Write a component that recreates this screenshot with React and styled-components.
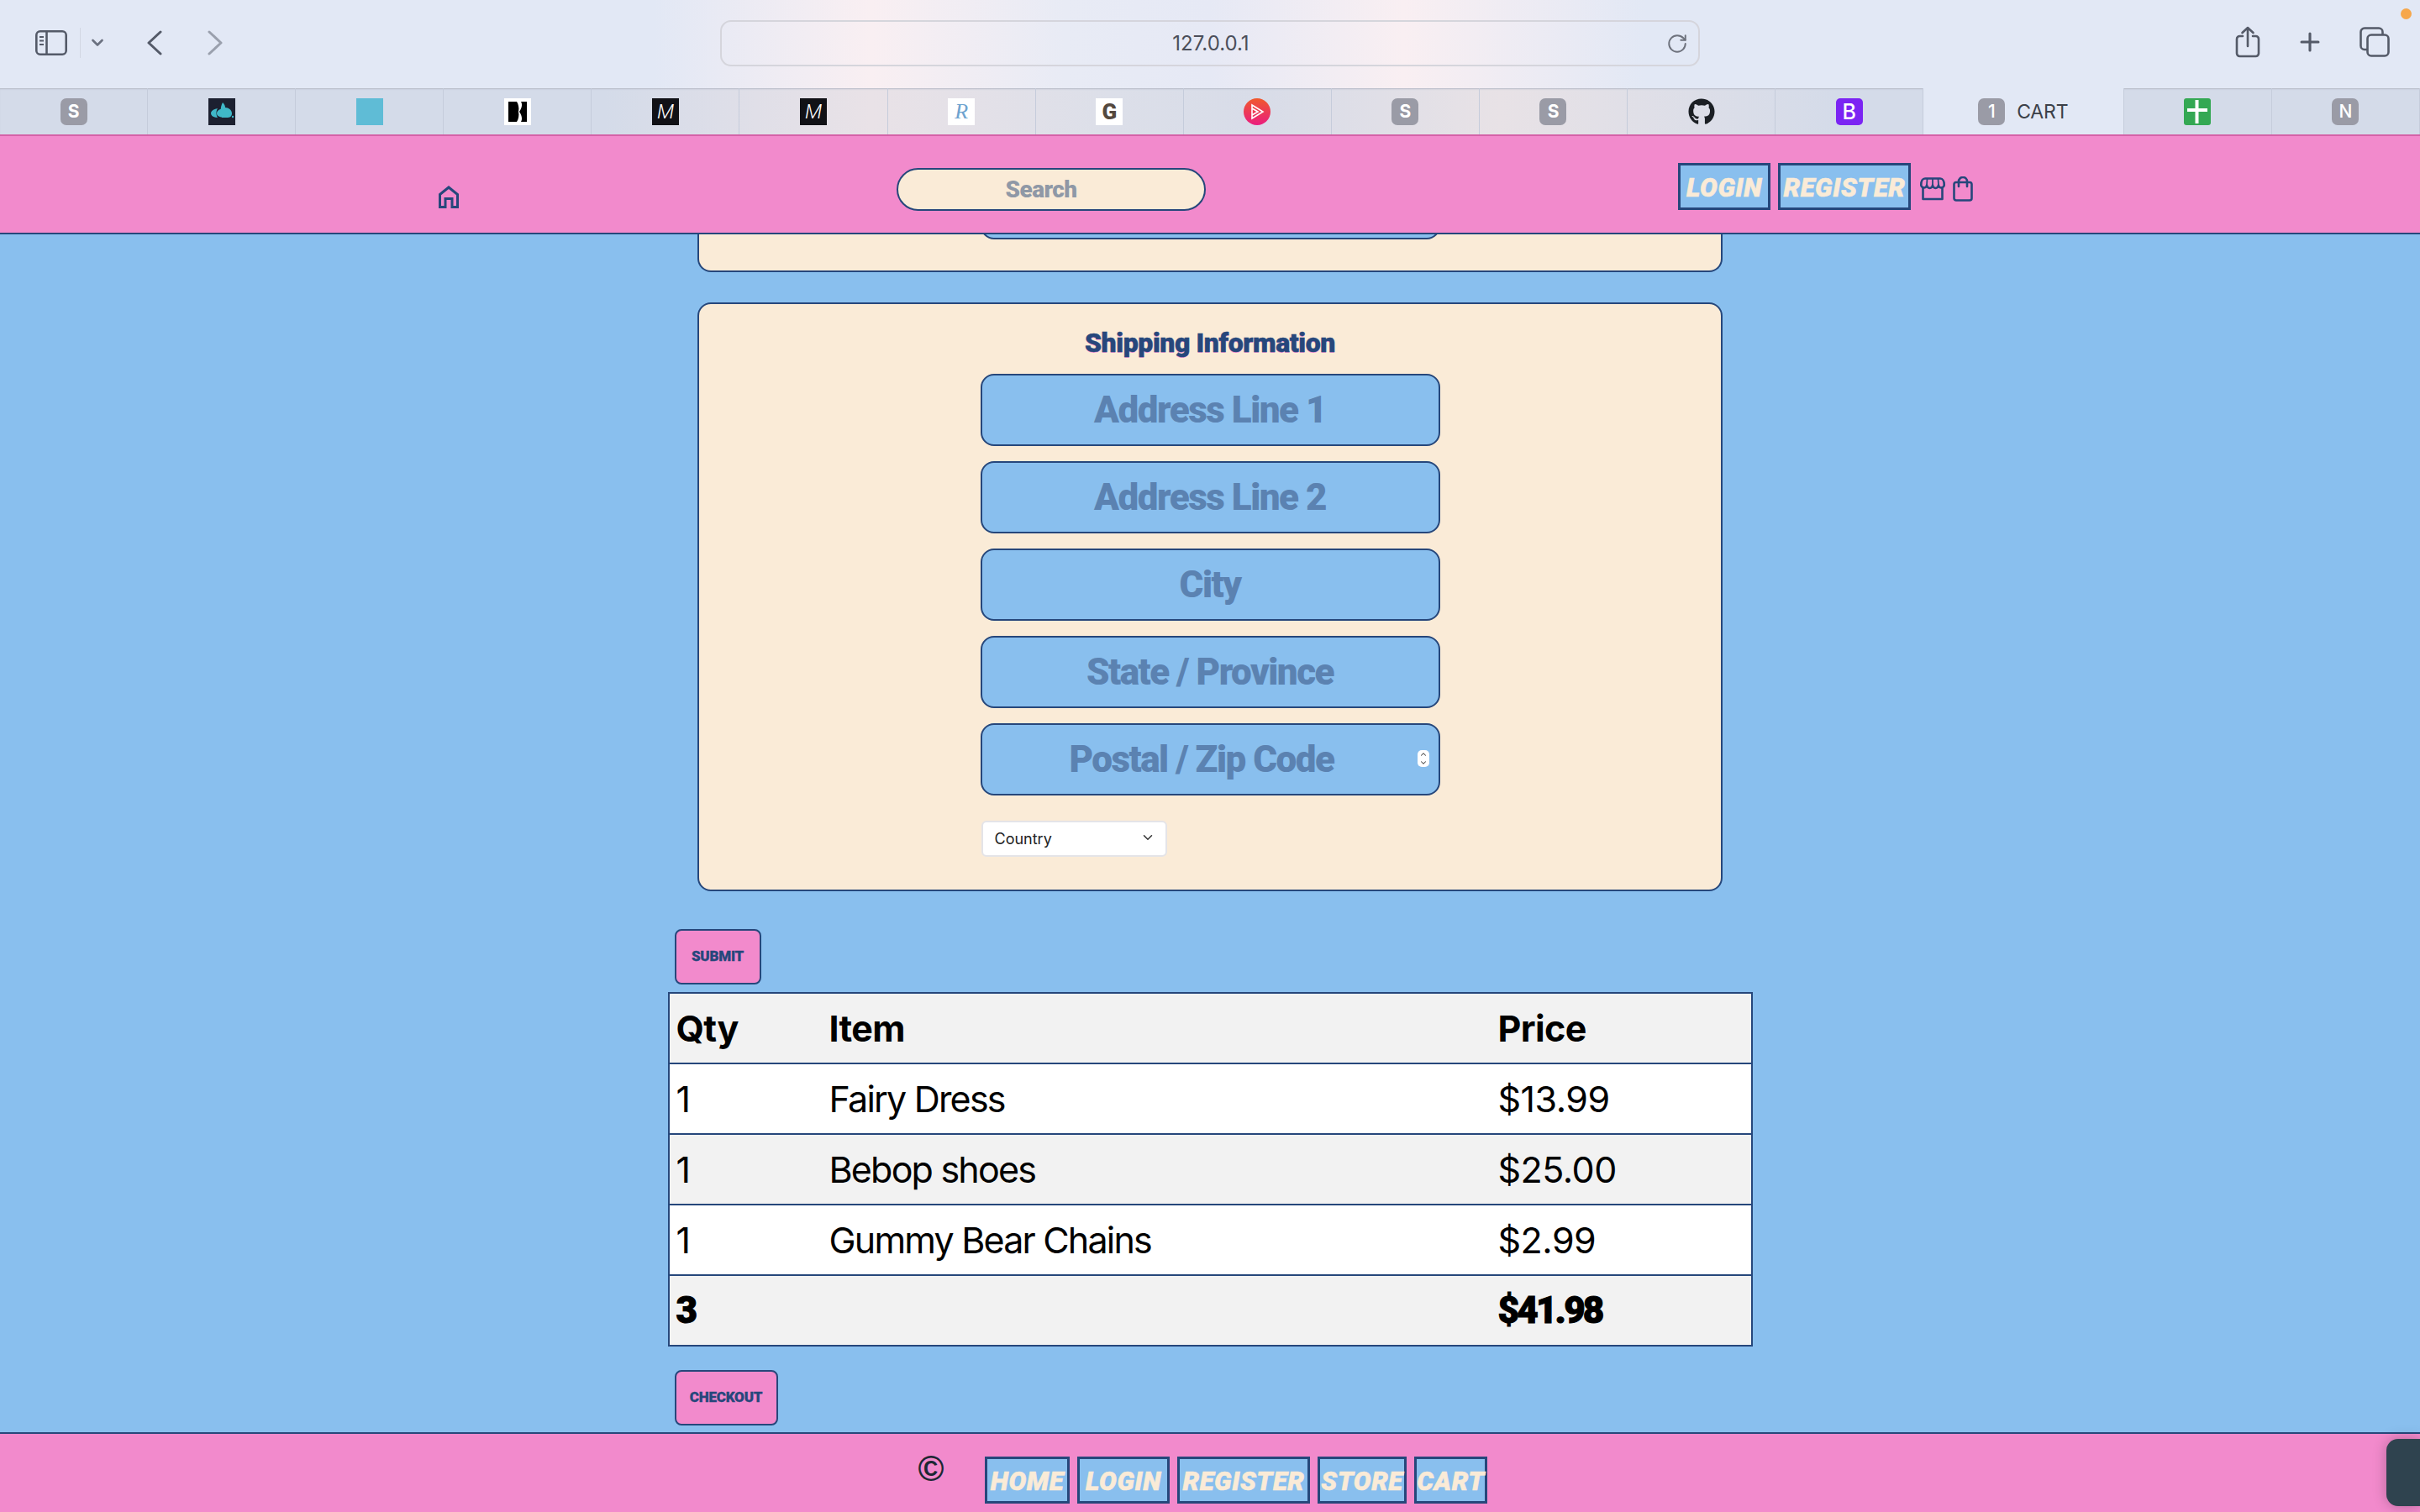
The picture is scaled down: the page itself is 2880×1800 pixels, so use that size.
import React from 'react';
import styled, { createGlobalStyle } from 'styled-components';
import { FaGithub } from 'react-icons/fa';
import { ChevronDown, ChevronUp, Plus, RotateCw } from 'lucide-react';

const navy = '#26477b';
const pink = '#f28acc';
const blue = '#89bfee';
const cream = '#faebd7';
const chunky = "'Roboto', 'Liberation Sans', sans-serif";
const brush = "'Roboto', 'Liberation Sans', sans-serif";

const GlobalStyle = createGlobalStyle`
    html, body {
        margin: 0;
        padding: 0;
        height: 1800px;
        overflow: hidden;
        background: ${blue};
        font-family: 'Inter', 'Liberation Sans', sans-serif;
    }
    * { box-sizing: border-box; }
`;

const Page = styled.div`
    width: 2880px;
    height: 1800px;
    display: flex;
    flex-direction: column;
    position: relative;
    overflow: hidden;
`;

const Toolbar = styled.div`
    height: 105px;
    display: flex;
    align-items: flex-start;
    position: relative;
    color: #545a68;
    background: linear-gradient(90deg, #e2e8f5 0%, #e2e8f5 27%, #f9eff2 36%, #e8ebf5 44%, #e6e9f5 50%, #f9eff2 58%, #e2e8f5 68%, #e2e8f5 100%);
`;

const ToolbarLeft = styled.div`
    display: flex;
    align-items: center;
    height: 44px;
    margin-top: 29px;
    padding-left: 42px;
    width: 857px;
`;

const Separator = styled.span`
    width: 1px;
    height: 36px;
    margin: 0 13px 0 15px;
    background: #d2d7e3;
`;

const ChromeGlyph = styled.svg`
    display: block;
    margin-left: ${(p) => p.$left || 0}px;
    opacity: ${(p) => p.$dim ? 0.5 : 1};
`;

const AddressBar = styled.div`
    width: 1166px;
    height: 55px;
    margin-top: 24px;
    border: 2px solid #d5d5dc;
    border-radius: 13px;
    display: flex;
    align-items: center;
    justify-content: center;
    position: relative;
    font-size: 24px;
    color: #4b4f5a;
    padding-left: 2px;
`;

const Reload = styled.span`
    position: absolute;
    right: 12px;
    top: 13px;
    display: flex;
    color: #6d717c;
`;

const ToolbarRight = styled.div`
    flex: 1;
    display: flex;
    align-items: center;
    height: 44px;
    margin-top: 28px;
    padding-left: 637px;
    gap: 45px;
`;

const OrangeDot = styled.span`
    position: absolute;
    right: 10px;
    top: 10px;
    width: 13px;
    height: 13px;
    border-radius: 50%;
    background: #f6a74b;
`;

const TabStrip = styled.div`
    height: 55px;
    display: flex;
    background: linear-gradient(90deg, #d4dbe9 0%, #d4dbe9 25%, #e9e2e7 36%, #dcdfe9 46%, #d8dce8 52%, #e8e2e6 62%, #d4dbe9 76%, #d4dbe9 100%);
    box-shadow: inset 0 2px 2px -1px #b4b8c4;
`;

const Tab = styled.div`
    flex: ${(p) => (p.$active ? '0 0 238.5px' : '0 0 176.1px')};
    display: flex;
    align-items: center;
    justify-content: ${(p) => (p.$active ? 'flex-start' : 'center')};
    gap: 14px;
    padding-left: ${(p) => (p.$active ? '65px' : '0')};
    border-right: 1px solid #c5ccdb;
    background: ${(p) => (p.$active ? '#e2e8f5' : 'transparent')};
    font-size: 23px;
    color: #3c4048;
    letter-spacing: -0.2px;
`;

const Favicon = styled.span`
    width: 32px;
    height: 32px;
    flex: none;
    display: flex;
    align-items: center;
    justify-content: center;
    overflow: hidden;
    border-radius: ${(p) => p.$radius || '0'};
    background: ${(p) => p.$bg || 'transparent'};
    color: ${(p) => p.$color || '#fff'};
    font-family: ${(p) => p.$font || "'Inter', sans-serif"};
    font-style: ${(p) => p.$italic ? 'italic' : 'normal'};
    font-weight: ${(p) => p.$weight || 700};
    font-size: ${(p) => p.$size || '21px'};
    line-height: 32px;
`;

const Viewport = styled.div`
    flex: 1;
    display: flex;
    flex-direction: column;
    background: ${blue};
    min-height: 0;
`;

const Header = styled.header`
    height: 119px;
    flex: none;
    display: flex;
    align-items: flex-start;
    background: ${pink};
    border-top: 2px solid #d562a8;
    border-bottom: 2px solid ${navy};
    position: relative;
    z-index: 2;
`;

const HomeLink = styled.a`
    display: flex;
    color: ${navy};
    margin: 59px 0 0 522px;
`;

const SearchInput = styled.input`
    width: 368px;
    height: 51px;
    margin: 38px 0 0 521px;
    padding: 0 24px 0 0;
    border: 2px solid ${navy};
    border-radius: 26px;
    background: ${cream};
    text-align: center;
    font-family: ${chunky};
    font-weight: 900;
    font-size: 28px;
    letter-spacing: -0.6px;
    outline: none;
    &::placeholder {
        color: #8f98a6;
        opacity: 1;
    }
`;

const HeaderNav = styled.nav`
    display: flex;
    align-items: flex-start;
    gap: 9px;
    margin: 32px 0 0 562px;
`;

const NavLink = styled.a`
    height: 56px;
    width: ${(p) => p.$w}px;
    flex: none;
    display: flex;
    align-items: center;
    justify-content: center;
    background: ${blue};
    border: 3px solid ${navy};
    color: ${cream};
    font-family: ${brush};
    font-style: italic;
    font-weight: 900;
    font-size: 31px;
    letter-spacing: 0.6px;
    -webkit-text-stroke: 0.6px ${cream};
    padding-top: 2px;
    text-transform: uppercase;
`;

const HeaderIcon = styled.a`
    display: flex;
    color: ${navy};
    margin-top: ${(p) => p.$top}px;
    margin-left: ${(p) => p.$left}px;
`;

const Main = styled.main`
    flex: 1;
    min-height: 0;
    width: 1291px;
    margin: 0 auto;
    display: flex;
    flex-direction: column;
`;

const Card = styled.section`
    width: 1220px;
    margin: 0 auto;
    background: ${cream};
    border: 2px solid ${navy};
    border-radius: 16px;
    display: flex;
    flex-direction: column;
    align-items: center;
`;

const ScrolledCard = styled(Card)`
    height: 45px;
    flex: none;
    border-top: none;
    border-radius: 0 0 16px 16px;
    overflow: hidden;
    margin-bottom: 36px;
`;

const FormStack = styled.div`
    display: flex;
    flex-direction: column;
    gap: 18px;
    width: 547px;
`;

const FormTitle = styled.h2`
    margin: 28px 0 18px;
    font-family: ${chunky};
    font-weight: 900;
    font-size: 32px;
    line-height: 37px;
    letter-spacing: -0.4px;
    color: ${navy};
    -webkit-text-stroke: 0.5px ${navy};
    text-shadow: 0 1px 0 #f59ad6;
`;

const InputWrap = styled.div`
    position: relative;
    display: flex;
`;

const FormInput = styled.input`
    width: 547px;
    height: 86px;
    flex: none;
    padding: 0 ${(p) => (p.$spin ? '20px' : '0')} 0 0;
    background: ${blue};
    border: 2px solid ${navy};
    border-radius: 16px;
    text-align: center;
    font-family: ${chunky};
    font-weight: 900;
    font-size: 44px;
    letter-spacing: -1.5px;
    outline: none;
    &::placeholder {
        color: #5b82b1;
        opacity: 1;
    }
`;

const ScrolledInput = styled(FormInput)`
    margin-top: -80px;
`;

const Spinner = styled.span`
    position: absolute;
    right: 13px;
    top: 32px;
    width: 14px;
    height: 20px;
    border-radius: 5px;
    background: #fff;
    color: #444;
    display: flex;
    flex-direction: column;
    align-items: center;
    justify-content: center;
`;

const SelectWrap = styled.div`
    position: relative;
    width: 221px;
    margin: 12px 0 39px 1px;
    color: #333;
`;

const CountrySelect = styled.select`
    width: 221px;
    height: 43px;
    display: block;
    appearance: none;
    padding: 0 0 0 14px;
    border: 2px solid #e4e4e8;
    border-radius: 6px;
    background: #fff;
    color: #222;
    font-family: 'Inter', sans-serif;
    font-size: 18px;
`;

const SelectArrow = styled.span`
    position: absolute;
    right: 14px;
    top: 11px;
    display: flex;
`;

const ActionButton = styled.button`
    flex: none;
    align-self: flex-start;
    height: 66px;
    width: ${(p) => p.$w}px;
    margin: ${(p) => p.$margin};
    padding: 0 0 2px;
    background: ${pink};
    border: 2px solid ${navy};
    border-radius: 8px;
    color: ${navy};
    font-family: ${chunky};
    font-weight: 900;
    font-size: 17px;
    letter-spacing: -0.2px;
    -webkit-text-stroke: 0.3px ${navy};
    text-transform: uppercase;
`;

const CartTable = styled.table`
    width: 1291px;
    flex: none;
    table-layout: fixed;
    border-collapse: collapse;
    border: 2px solid ${navy};
    font-size: 43px;
    color: #000;
`;

const Row = styled.tr`
    height: 84px;
    background: ${(p) => (p.$shade ? '#f2f2f2' : '#fff')};
    border-bottom: 2px solid ${navy};
`;

const HeadCell = styled.th`
    padding: 0 0 0 8px;
    text-align: left;
    font-weight: 700;
    letter-spacing: -0.6px;
`;

const Cell = styled.td`
    padding: 0 0 0 8px;
    letter-spacing: ${(p) => (p.$tight ? '-1.8px' : '-0.5px')};
`;

const TotalCell = styled.td`
    padding: 0 0 0 8px;
    font-family: ${chunky};
    font-weight: 900;
    font-size: 44px;
    letter-spacing: -2.8px;
    -webkit-text-stroke: 1px #000;
`;

const Footer = styled.footer`
    height: 95px;
    flex: none;
    display: flex;
    align-items: flex-start;
    padding: 27px 0 0 1090px;
    background: ${pink};
    border-top: 2px solid ${navy};
    position: relative;
`;

const Copyright = styled.span`
    width: 36px;
    margin: -9px 46px 0 0;
    text-align: center;
    font-family: 'Liberation Sans', sans-serif;
    font-weight: 700;
    font-size: 42px;
    line-height: 48px;
    color: #1d2733;
`;

const FooterNav = styled.nav`
    display: flex;
    gap: 9px;
`;

const SideHandle = styled.div`
    position: absolute;
    right: 0;
    bottom: 7px;
    width: 40px;
    height: 80px;
    border-radius: 14px 0 0 14px;
    background: #2f434f;
    box-shadow: 0 0 16px rgba(0, 0, 0, 0.25);
`;

const SidebarIcon = () => (
    <svg width="38" height="30" viewBox="0 0 38 30" fill="none" stroke="currentColor" strokeWidth="2.6">
        <rect x="1.3" y="1.3" width="35.4" height="27.4" rx="4.500" />
        <path d="M13.500 1.500v27" />
        <path d="M5 8h5M5 12.500h5M5 17h5" strokeWidth="1.800" />
    </svg>
);

const SmallChevron = () => (
    <ChromeGlyph width="14" height="10" viewBox="0 0 14 10" fill="none" stroke="#6b7180" strokeWidth="2.600" strokeLinecap="round" strokeLinejoin="round">
        <path d="M1.500 2 7 7.500 12.500 2" />
    </ChromeGlyph>
);

const BackChevron = () => (
    <ChromeGlyph $left={52} width="18" height="30" viewBox="0 0 18 30" fill="none" stroke="currentColor" strokeWidth="3" strokeLinecap="round" strokeLinejoin="round">
        <path d="M16 2 2 15l14 13" />
    </ChromeGlyph>
);

const ForwardChevron = () => (
    <ChromeGlyph $left={54} $dim width="18" height="30" viewBox="0 0 18 30" fill="none" stroke="currentColor" strokeWidth="3" strokeLinecap="round" strokeLinejoin="round">
        <path d="m2 2 14 13L2 28" />
    </ChromeGlyph>
);

const ShareIcon = () => (
    <svg width="30" height="38" viewBox="0 0 30 38" fill="none" stroke="currentColor" strokeWidth="2.600" strokeLinecap="round" strokeLinejoin="round">
        <path d="M9 12H5.500A3.500 3.500 0 0 0 2 15.500v17A3.500 3.500 0 0 0 5.500 36h19a3.500 3.500 0 0 0 3.500-3.500v-17A3.500 3.500 0 0 0 24.500 12H21" />
        <path d="M15 24V2M8.500 8 15 2l6.500 6" />
    </svg>
);

const TabsIcon = () => (
    <svg width="36" height="36" viewBox="0 0 36 36" fill="none" stroke="currentColor" strokeWidth="2.600">
        <path d="M9 27H6a4.500 4.500 0 0 1-4.500-4.500V6A4.500 4.500 0 0 1 6 1.500h17A4.500 4.500 0 0 1 27.500 6v3" />
        <rect x="9.500" y="9.500" width="25" height="25" rx="4.500" />
    </svg>
);

const HomeIcon = () => (
    <svg width="24" height="27" viewBox="0 0 24 27" fill="none" stroke="currentColor" strokeWidth="3" strokeLinejoin="miter">
        <path d="M1.500 10.500 12 2l10.500 8.500v15h-6.500V15.500H8v10H1.500z" />
    </svg>
);

const StoreIcon = () => (
    <svg width="30" height="28" viewBox="0 0 30 28" fill="none" stroke="currentColor" strokeWidth="2.600" strokeLinecap="round" strokeLinejoin="round">
        <path d="M6 1.500h18c3 0 4.700 3.500 4.700 7a3.300 3.300 0 0 1-6.800 1 3.400 3.400 0 0 1-6.900 0 3.400 3.400 0 0 1-6.900 0 3.300 3.300 0 0 1-6.800-1c0-3.500 1.700-7 4.700-7z" />
        <path d="M8.500 2 8 9M15 2v7M21.500 2l.5 7" strokeWidth="1.800" />
        <path d="M3.500 13v13h23V13" />
    </svg>
);

const BagIcon = () => (
    <svg width="24" height="30" viewBox="0 0 24 30" fill="none" stroke="currentColor" strokeWidth="2.600" strokeLinecap="round" strokeLinejoin="round">
        <rect x="1.500" y="7" width="21" height="21.500" rx="2.500" />
        <path d="M7 12V6a5 5 0 0 1 10 0v6" />
    </svg>
);

const LeafMark = () => (
    <svg width="32" height="32" viewBox="0 0 32 32">
        <rect width="32" height="32" fill="#1c2030" />
        <path d="M11 12C6 13 3 15 3 18c0 3 4 5 8 5 -2-3-2-8 0-11zM17 12c-4 1-7 3-7 6s3 4 7 5c-2-3-2-8 0-11zM17 5c-3 5-3 13-1 18h7c4 0 5-3 5-5 0-4-4-7-8-7 0-2-1-4-3-6z" fill="#3fb8c8" />
        <circle cx="29" cy="22" r="1.200" fill="#3fb8c8" />
    </svg>
);

const BarsMark = () => (
    <svg width="32" height="32" viewBox="0 0 32 32">
        <rect width="32" height="32" fill="#fff" />
        <rect x="5" y="4" width="22" height="24" fill="#000" />
        <path d="M15 4h5c2 3 1 8-2 12 3 4 4 9 2 12h-5c2-3 3-8 2-12 1-4 0-9-2-12z" fill="#fff" />
    </svg>
);

const PlayMark = () => (
    <svg width="32" height="32" viewBox="0 0 32 32">
        <defs>
            <linearGradient id="playFill" x1="0" y1="0" x2="0" y2="1">
                <stop offset="0" stopColor="#f0592c" />
                <stop offset="1" stopColor="#ea1d7f" />
            </linearGradient>
        </defs>
        <circle cx="16" cy="16" r="16" fill="url(#playFill)" />
        <path d="M10 8l13 8-13 8zM10 12l7 4-7 4" fill="none" stroke="#fff" strokeWidth="1.600" />
    </svg>
);

const CrossMark = () => (
    <svg width="32" height="32" viewBox="0 0 32 32">
        <rect width="32" height="32" rx="3" fill="#34a853" />
        <path d="M13.500 2h4v10H28v4H17.500v14h-4V16H4v-4h9.500z" fill="#fff" />
    </svg>
);

const tabs = [
    { key: 's1', fav: <Favicon $bg="#9a9ba6" $radius="7px">S</Favicon> },
    { key: 'leaf', fav: <Favicon><LeafMark /></Favicon> },
    { key: 'teal', fav: <Favicon $bg="#5fbcd6" /> },
    { key: 'bars', fav: <Favicon><BarsMark /></Favicon> },
    { key: 'm1', fav: <Favicon $bg="#111116" $italic $weight={300} $size="24px" $font="'Roboto', sans-serif">M</Favicon> },
    { key: 'm2', fav: <Favicon $bg="#111116" $italic $weight={300} $size="24px" $font="'Roboto', sans-serif">M</Favicon> },
    { key: 'r', fav: <Favicon $bg="#fff" $color="#6ea3cf" $italic $weight={400} $size="26px" $font="'Liberation Serif', serif">R</Favicon> },
    { key: 'g', fav: <Favicon $bg="#fff" $color="#54493f" $weight={900} $size="26px" $font="'Roboto', sans-serif">G</Favicon> },
    { key: 'play', fav: <Favicon><PlayMark /></Favicon> },
    { key: 's2', fav: <Favicon $bg="#9a9ba6" $radius="7px">S</Favicon> },
    { key: 's3', fav: <Favicon $bg="#9a9ba6" $radius="7px">S</Favicon> },
    { key: 'github', fav: <Favicon $color="#1b1f24"><FaGithub size={32} /></Favicon> },
    { key: 'boot', fav: <Favicon $bg="#7b24f3" $radius="5px" $weight={500} $size="25px">B</Favicon> },
    { key: 'cart', active: true, label: 'CART', fav: <Favicon $bg="#9a9ba6" $radius="7px" $weight={500}>1</Favicon> },
    { key: 'cross', fav: <Favicon><CrossMark /></Favicon> },
    { key: 'n', fav: <Favicon $bg="#9a9ba6" $radius="7px" $weight={500}>N</Favicon> },
];

const shippingFields = ['Address Line 1', 'Address Line 2', 'City', 'State / Province'];

const cartItems = [
    { name: 'Fairy Dress', price: '$13.99' },
    { name: 'Bebop shoes', price: '$25.00' },
    { name: 'Gummy Bear Chains', price: '$2.99' },
];

const footerLinks = [
    { label: 'Home', w: 101 },
    { label: 'Login', w: 110 },
    { label: 'Register', w: 158 },
    { label: 'Store', w: 106 },
    { label: 'Cart', w: 87 },
];

const App = () => (
    <Page>
        <GlobalStyle />
        <Toolbar>
            <ToolbarLeft>
                <SidebarIcon />
                <Separator />
                <SmallChevron />
                <BackChevron />
                <ForwardChevron />
            </ToolbarLeft>
            <AddressBar>
                127.0.0.1
                <Reload><RotateCw size={26} strokeWidth={1.8} /></Reload>
            </AddressBar>
            <ToolbarRight>
                <ShareIcon />
                <Plus size={34} strokeWidth={2.2} style={{ margin: '0 -3px' }} />
                <TabsIcon />
            </ToolbarRight>
            <OrangeDot />
        </Toolbar>
        <TabStrip>
            {tabs.map((tab) => (
                <Tab key={tab.key} $active={tab.active}>
                    {tab.fav}
                    {tab.label}
                </Tab>
            ))}
        </TabStrip>
        <Viewport>
            <Header>
                <HomeLink><HomeIcon /></HomeLink>
                <SearchInput placeholder="Search" />
                <HeaderNav>
                    <NavLink $w={110}>Login</NavLink>
                    <NavLink $w={158}>Register</NavLink>
                </HeaderNav>
                <HeaderIcon $top={49} $left={11}><StoreIcon /></HeaderIcon>
                <HeaderIcon $top={48} $left={9}><BagIcon /></HeaderIcon>
            </Header>
            <Main>
                <ScrolledCard>
                    <ScrolledInput />
                </ScrolledCard>
                <Card>
                    <FormTitle>Shipping Information</FormTitle>
                    <FormStack>
                        {shippingFields.map((field) => (
                            <FormInput key={field} placeholder={field} />
                        ))}
                        <InputWrap>
                            <FormInput $spin placeholder="Postal / Zip Code" />
                            <Spinner>
                                <ChevronUp size={10} strokeWidth={2.5} />
                                <ChevronDown size={10} strokeWidth={2.5} />
                            </Spinner>
                        </InputWrap>
                        <SelectWrap>
                            <CountrySelect defaultValue="Country">
                                <option>Country</option>
                            </CountrySelect>
                            <SelectArrow><ChevronDown size={18} strokeWidth={2} /></SelectArrow>
                        </SelectWrap>
                    </FormStack>
                </Card>
                <ActionButton $w={103} $margin="45px 0 9px 8px">Submit</ActionButton>
                <CartTable>
                    <colgroup>
                        <col width="183" />
                        <col width="796" />
                        <col />
                    </colgroup>
                    <thead>
                        <Row $shade>
                            <HeadCell>Qty</HeadCell>
                            <HeadCell>Item</HeadCell>
                            <HeadCell>Price</HeadCell>
                        </Row>
                    </thead>
                    <tbody>
                        {cartItems.map((item, index) => (
                            <Row key={item.name} $shade={index % 2 === 1}>
                                <Cell>1</Cell>
                                <Cell $tight>{item.name}</Cell>
                                <Cell>{item.price}</Cell>
                            </Row>
                        ))}
                        <Row $shade>
                            <TotalCell>3</TotalCell>
                            <TotalCell />
                            <TotalCell>$41.98</TotalCell>
                        </Row>
                    </tbody>
                </CartTable>
                <ActionButton $w={123} $margin="28px 0 0 8px">Checkout</ActionButton>
            </Main>
            <Footer>
                <Copyright>©</Copyright>
                <FooterNav>
                    {footerLinks.map((link) => (
                        <NavLink key={link.label} $w={link.w}>{link.label}</NavLink>
                    ))}
                </FooterNav>
                <SideHandle />
            </Footer>
        </Viewport>
    </Page>
);

export default App;
